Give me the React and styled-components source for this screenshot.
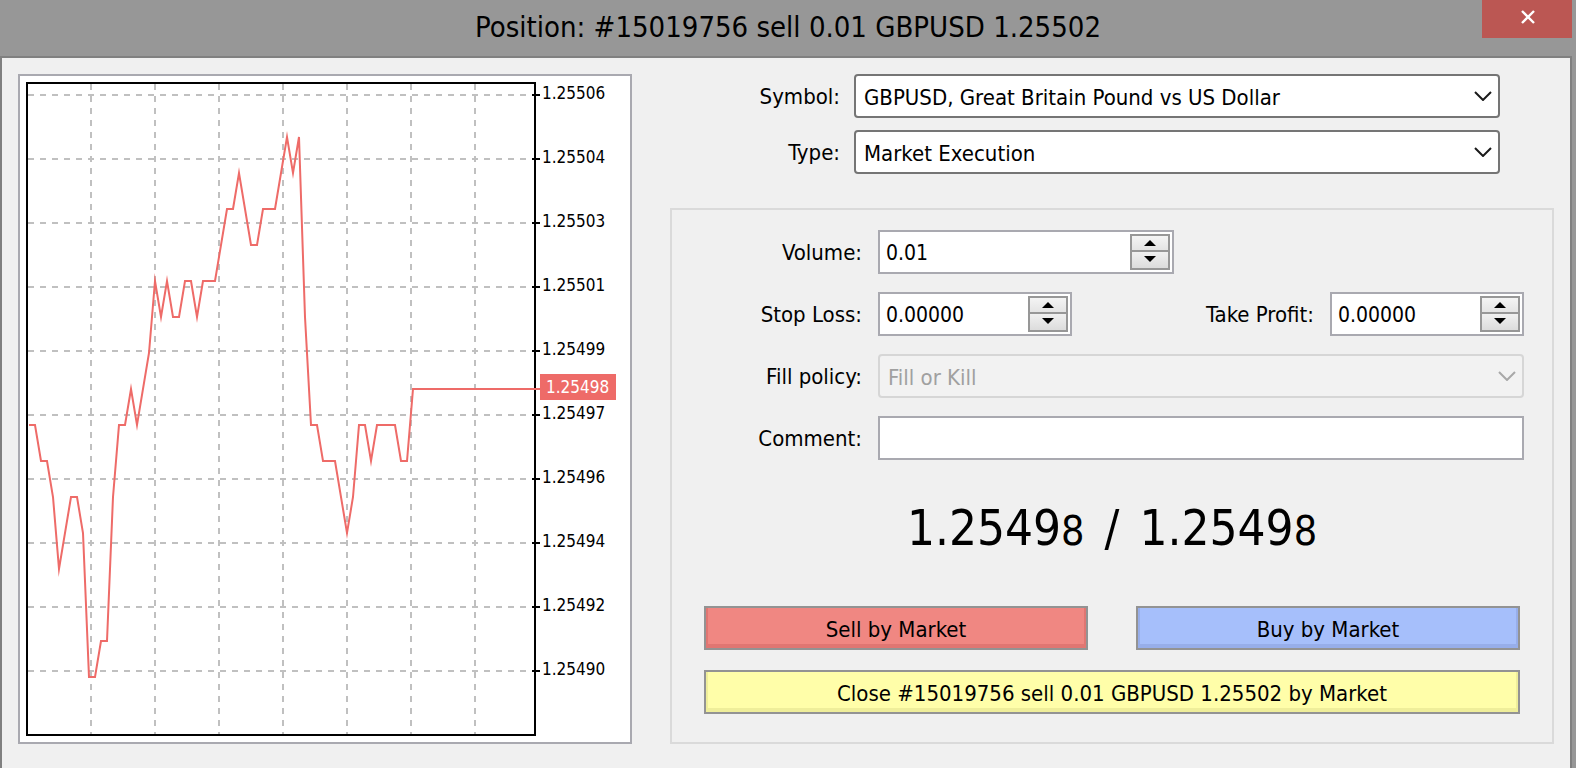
import React, { useState } from "react";
import styled, { createGlobalStyle } from "styled-components";

const PRICE_LABELS = [
  "1.25506",
  "1.25504",
  "1.25503",
  "1.25501",
  "1.25499",
  "1.25497",
  "1.25496",
  "1.25494",
  "1.25492",
  "1.25490",
];

const GRID_COLUMNS = [71, 135, 199, 263, 327, 391, 455];

// [x, y] in chart units, one tick every 6 units
const TICKS = [
  [9, 349], [15, 349], [21, 385], [27, 385], [33, 421], [39, 493], [51, 421],
  [57, 421], [63, 457], [69, 601], [75, 601], [81, 565], [87, 565], [93, 421],
  [99, 349], [105, 349], [111, 313], [117, 349], [129, 277], [135, 205],
  [141, 241], [147, 205], [153, 241], [159, 241], [165, 205], [171, 205],
  [177, 241], [183, 205], [195, 205], [207, 133], [213, 133], [219, 97],
  [231, 169], [237, 169], [243, 133], [255, 133], [267, 61], [273, 97],
  [279, 61], [285, 241], [291, 349], [297, 349], [303, 385], [315, 385],
  [327, 457], [333, 421], [339, 349], [345, 349], [351, 385], [357, 349],
  [375, 349], [381, 385], [387, 385], [393, 313], [520, 313],
];

const TickChart = () => {
  return (
    <ChartPanel>
      <ChartSvg viewBox="0 0 610 666" role="img" aria-label="GBPUSD tick chart">
        {GRID_COLUMNS.map((x) => (
          <line key={x} className="grid" x1={x} x2={x} y1="8" y2="659" />
        ))}
        {PRICE_LABELS.map((label, i) => (
          <line key={label} className="grid" x1="8" x2="514" y1={19 + i * 64} y2={19 + i * 64} />
        ))}
        <rect className="frame" x="7" y="7" width="508" height="652" />
        {PRICE_LABELS.map((label, i) => (
          <g key={label}>
            <line className="tick" x1="512" x2="520" y1={19 + i * 64} y2={19 + i * 64} />
            <text x="522" y={23 + i * 64}>
              {label}
            </text>
          </g>
        ))}
        <polyline className="price" points={TICKS.map((t) => t.join(",")).join(" ")} />
        <rect className="tag" x="520" y="298" width="76" height="26" />
        <text className="tagText" x="526" y="317">
          1.25498
        </text>
      </ChartSvg>
    </ChartPanel>
  );
};

const Dropdown = ({ id, value, disabled }) => {
  return (
    <SelectWrap>
      <Select id={id} defaultValue={value} disabled={disabled}>
        <option>{value}</option>
      </Select>
      <Chevron viewBox="0 0 18 10" $disabled={disabled}>
        <path d="M1 1 L9 9 L17 1" />
      </Chevron>
    </SelectWrap>
  );
};

const Spinner = ({ id, initial, step, digits, wide }) => {
  const [value, setValue] = useState(initial);

  const move = (direction) => {
    const next = Math.max(0, (parseFloat(value) || 0) + direction * step);
    setValue(next.toFixed(digits));
  };

  return (
    <SpinBox $wide={wide}>
      <SpinInput id={id} type="text" value={value} onChange={(e) => setValue(e.target.value)} />
      <SpinButtons>
        <button type="button" aria-label="Increase" onClick={() => move(1)}>
          <svg viewBox="0 0 12 6">
            <path d="M0 6 L6 0 L12 6 Z" />
          </svg>
        </button>
        <button type="button" aria-label="Decrease" onClick={() => move(-1)}>
          <svg viewBox="0 0 12 6">
            <path d="M0 0 L6 6 L12 0 Z" />
          </svg>
        </button>
      </SpinButtons>
    </SpinBox>
  );
};

const App = () => {
  return (
    <Window>
      <GlobalStyle />
      <TitleBar>
        <Title>Position: #15019756 sell 0.01 GBPUSD 1.25502</Title>
        <CloseButton type="button" aria-label="Close">
          <svg viewBox="0 0 14 14">
            <path d="M1 1 L13 13 M13 1 L1 13" />
          </svg>
        </CloseButton>
      </TitleBar>
      <Body>
        <TickChart />
        <OrderForm onSubmit={(e) => e.preventDefault()}>
          <SymbolFields>
            <Label htmlFor="symbol">Symbol:</Label>
            <Dropdown id="symbol" value="GBPUSD, Great Britain Pound vs US Dollar" />
            <Label htmlFor="type">Type:</Label>
            <Dropdown id="type" value="Market Execution" />
          </SymbolFields>
          <OrderBox>
            <Fields>
              <Label htmlFor="volume">Volume:</Label>
              <Spinner id="volume" initial="0.01" step={0.01} digits={2} wide />
              <Label htmlFor="stopLoss">Stop Loss:</Label>
              <SplitRow>
                <Spinner id="stopLoss" initial="0.00000" step={0.00001} digits={5} />
                <InlineField>
                  <Label htmlFor="takeProfit">Take Profit:</Label>
                  <Spinner id="takeProfit" initial="0.00000" step={0.00001} digits={5} />
                </InlineField>
              </SplitRow>
              <Label htmlFor="fillPolicy">Fill policy:</Label>
              <Dropdown id="fillPolicy" value="Fill or Kill" disabled />
              <Label htmlFor="comment">Comment:</Label>
              <TextInput id="comment" type="text" />
            </Fields>
            <Quote>
              1.2549<small>8</small> <span>/</span> 1.2549<small>8</small>
            </Quote>
            <Actions>
              <ActionButton type="button" $color="#f08782" $shade="#e07672">
                Sell by Market
              </ActionButton>
              <ActionButton type="button" $color="#a6bffb" $shade="#97aeea">
                Buy by Market
              </ActionButton>
              <ActionButton type="button" $color="#fffea9" $shade="#efee9a" $full>
                Close #15019756 sell 0.01 GBPUSD 1.25502 by Market
              </ActionButton>
            </Actions>
          </OrderBox>
        </OrderForm>
      </Body>
    </Window>
  );
};

const GlobalStyle = createGlobalStyle`
  * {
    box-sizing: border-box;
  }
  body {
    margin: 0;
    background-color: #979797;
  }
  body, button, input, select {
    font-family: Tahoma, "DejaVu Sans Condensed", "Noto Sans", sans-serif;
    font-size: 22px;
    color: #000;
  }
`;

const Window = styled.div`
  display: flex;
  flex-direction: column;
  min-height: 100vh;
  background-color: #979797;
`;

const TitleBar = styled.header`
  display: grid;
  grid-template-columns: 90px 1fr 90px;
  height: 56px;
  padding: 0 4px;
`;

const Title = styled.h1`
  grid-column: 2;
  margin: 0;
  font-size: 29px;
  font-weight: 400;
  line-height: 54px;
  text-align: center;
  white-space: nowrap;
`;

const CloseButton = styled.button`
  display: flex;
  justify-content: center;
  align-items: center;
  height: 38px;
  padding: 0 0 4px 2px;
  border: none;
  background-color: #bb5753;
  svg {
    width: 14px;
    height: 14px;
    fill: none;
    stroke: #fff;
    stroke-width: 2.4;
  }
`;

const Body = styled.main`
  flex: 1;
  display: grid;
  grid-template-columns: minmax(0, 614fr) minmax(0, 884fr);
  align-items: start;
  gap: 38px;
  margin-right: 4px;
  padding: 16px 16px 24px;
  border: 2px solid #808080;
  border-bottom: none;
  background-color: #f0f0f0;
`;

const ChartPanel = styled.section`
  border: 2px solid #a9a9b0;
  background-color: #fff;
`;

const ChartSvg = styled.svg`
  display: block;
  width: 100%;
  font-size: 17px;
  .grid {
    stroke: #c0c0c0;
    stroke-width: 2;
    stroke-dasharray: 6 6;
  }
  .frame,
  .price {
    fill: none;
    stroke: #000;
    stroke-width: 2;
  }
  .price {
    stroke: #ee6b68;
    stroke-miterlimit: 10;
  }
  .tick {
    stroke: #000;
    stroke-width: 2;
  }
  .tag {
    fill: #ee6b68;
  }
  .tagText {
    fill: #fff;
  }
`;

const OrderForm = styled.form`
  display: flex;
  flex-direction: column;
  gap: 34px;
`;

const SymbolFields = styled.div`
  display: grid;
  grid-template-columns: 170px 1fr;
  gap: 12px 14px;
  padding-right: 54px;
`;

const OrderBox = styled.div`
  padding: 20px 28px 28px 0;
  border: 2px solid #dadada;
`;

const Fields = styled.div`
  display: grid;
  grid-template-columns: 190px 1fr;
  gap: 18px 16px;
`;

const Label = styled.label`
  padding-top: 2px;
  line-height: 42px;
  text-align: right;
  white-space: nowrap;
`;

const SplitRow = styled.div`
  display: flex;
  justify-content: space-between;
`;

const InlineField = styled.div`
  display: flex;
  gap: 16px;
`;

const SelectWrap = styled.div`
  position: relative;
`;

const Select = styled.select`
  appearance: none;
  display: block;
  width: 100%;
  height: 44px;
  padding: 2px 36px 0 8px;
  border: 2px solid #757575;
  border-radius: 4px;
  background-color: #fff;
  &:disabled {
    border-color: #d6d6d6;
    background-color: #f2f2f2;
    color: #a0a0a0;
    opacity: 1;
  }
`;

const Chevron = styled.svg`
  position: absolute;
  top: 17px;
  right: 8px;
  width: 18px;
  height: 10px;
  fill: none;
  stroke: ${(props) => (props.$disabled ? "#a8a8a8" : "#1a1a1a")};
  stroke-width: 2;
  pointer-events: none;
`;

const TextInput = styled.input`
  width: 100%;
  height: 44px;
  padding: 0 6px;
  border: 2px solid #a9a9b0;
  border-radius: 0;
  background-color: #fff;
`;

const SpinBox = styled.div`
  display: flex;
  width: ${(props) => (props.$wide ? "296px" : "194px")};
  height: 44px;
  padding: 2px;
  border: 2px solid #a9a9b0;
  background-color: #fff;
`;

const SpinInput = styled.input`
  flex: 1;
  min-width: 0;
  padding: 2px 4px 0;
  border: none;
  background: none;
  font-size: 21px;
`;

const SpinButtons = styled.div`
  display: flex;
  flex-direction: column;
  width: 40px;
  border: 2px solid #979797;
  button {
    display: flex;
    justify-content: center;
    align-items: flex-start;
    height: 14px;
    padding: 4px 0 0;
    border: none;
    background: linear-gradient(#f4f4f4, #e4e4e4);
  }
  button + button {
    height: 18px;
    border-top: 2px solid #979797;
    background: linear-gradient(#f0f0f0, #dcdcdc);
  }
  svg {
    width: 12px;
    height: 6px;
  }
`;

const Quote = styled.p`
  height: 146px;
  margin: 0 0 0 28px;
  font-size: 49px;
  line-height: 138px;
  text-align: center;
  white-space: nowrap;
  small {
    font-size: 41px;
  }
  span {
    margin: 0 6px;
  }
`;

const Actions = styled.div`
  display: grid;
  grid-template-columns: 1fr 1fr;
  gap: 20px 48px;
  margin: 0 4px 0 32px;
`;

const ActionButton = styled.button`
  grid-column: ${(props) => (props.$full ? "1 / -1" : "auto")};
  height: 44px;
  padding: 2px 0 0;
  border: 2px solid #939393;
  background-color: ${(props) => props.$color};
  box-shadow: inset 2px 0 ${(props) => props.$shade}, inset -2px -4px ${(props) => props.$shade};
`;

export default App;
